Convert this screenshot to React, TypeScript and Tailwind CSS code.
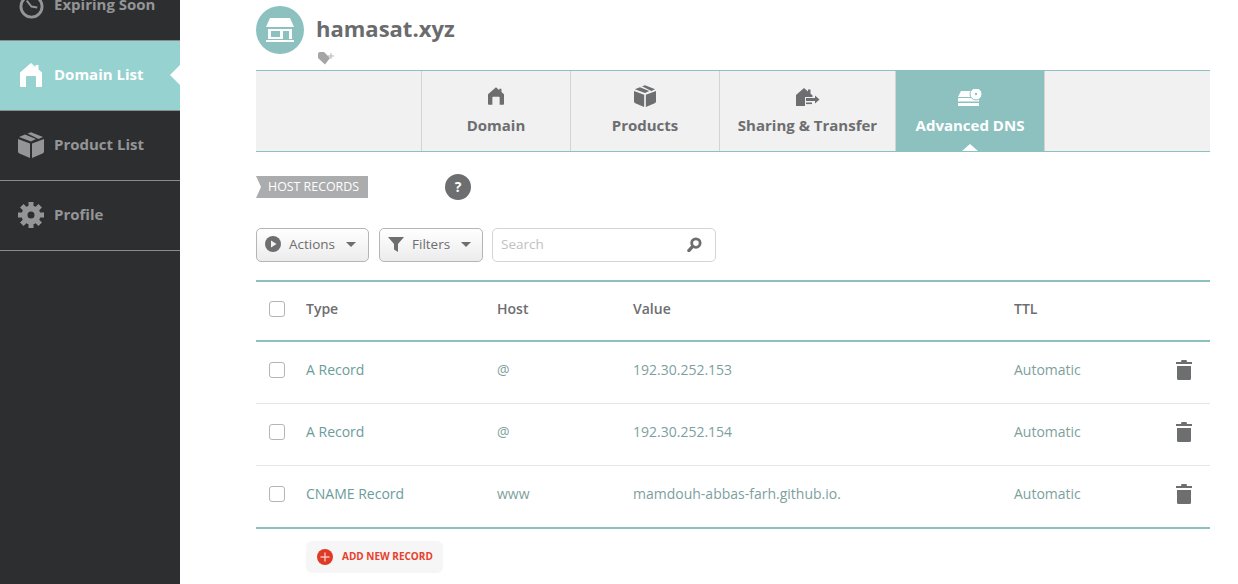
const fontStack = "font-['Open_Sans','Lato',sans-serif]";

// Icons drawn by hand to match the reference
function ClockIcon({ className }: { className?: string }) {
  return (
    <svg viewBox="0 0 26 26" className={className} fill="none" stroke="currentColor">
      <circle cx="13" cy="13" r="11" strokeWidth="3" />
      <path d="M8 7 L13 13 L19 14" strokeWidth="2" />
    </svg>
  );
}

function HomeIcon({ className }: { className?: string }) {
  return (
    <svg viewBox="0 0 22 24" className={className} fill="currentColor">
      <path d="M11 0 L15.5 4 V2 H18.5 V6.5 L22 9.5 V23 Q22 24 21 24 H16 V14 Q16 13 15 13 H7 Q6 13 6 14 V24 H1 Q0 24 0 23 V9.5 Z" />
    </svg>
  );
}

function BoxIcon({ className }: { className?: string }) {
  return (
    <svg viewBox="0 0 26 26" className={className} fill="currentColor">
      <path d="M0 7 L12 11.5 V26 L1.5 21.5 Q0 21 0 19.5 Z" />
      <path d="M26 7 L14 11.5 V26 L24.5 21.5 Q26 21 26 19.5 Z" />
      <path d="M1 5 L7 2.6 L18 7 L13 9.4 Z" />
      <path d="M9.5 1.6 L13 0.2 L25 5 L20.5 7 Z" />
    </svg>
  );
}

function GearIcon({ className }: { className?: string }) {
  return (
    <svg viewBox="0 0 26 26" className={className}>
      <circle cx="13" cy="13" r="6.5" fill="none" stroke="currentColor" strokeWidth="6" />
      <path
        stroke="currentColor"
        strokeWidth="5"
        d="M13 0 V5 M13 21 V26 M0 13 H5 M21 13 H26 M3.8 3.8 L7.3 7.3 M18.7 18.7 L22.2 22.2 M3.8 22.2 L7.3 18.7 M18.7 7.3 L22.2 3.8"
      />
    </svg>
  );
}

function StoreIcon({ className }: { className?: string }) {
  return (
    <svg viewBox="0 0 28 24" className={className} fill="white">
      <path d="M4 0 H24 L28 9 H0 Z" />
      <path fillRule="evenodd" d="M2 11 H26 V21 H2 Z M5 13 V19 H14 V13 Z M17 13 V21 H23 V13 Z" />
      <rect x="0" y="22" width="28" height="2" />
    </svg>
  );
}

function TagPlusIcon({ className }: { className?: string }) {
  return (
    <svg viewBox="0 0 17 13" className={className} fill="#a5a5a5">
      <path d="M0 2 Q0 0 2 0 H6 L12 6 L7 12.5 L0 6 Z" />
      <path d="M13 1 V7 M10 4 H16" stroke="#b5b5b5" strokeWidth="1" fill="none" />
    </svg>
  );
}

function ShareIcon({ className }: { className?: string }) {
  return (
    <svg viewBox="0 0 24 18" className={className} fill="currentColor">
      <path d="M8 0 L12 3.5 V1.5 H14.5 V5.5 L16.5 7.5 V9 H9 V18 H0 V7 Z" />
      <path d="M10 10 H19 V7.5 L23.5 11.5 L19 15.5 V13 H10 Z" />
      <rect x="10" y="14.5" width="6" height="1.6" />
    </svg>
  );
}

function ServerIcon({ className }: { className?: string }) {
  return (
    <svg viewBox="0 0 24 17" className={className} fill="white">
      <path d="M3 2 H15 V8 H0 Z" />
      <rect x="0" y="9" width="21" height="3.5" />
      <rect x="0" y="14" width="21" height="3" />
      <circle cx="18" cy="5" r="6" stroke="#8dc1c0" strokeWidth="1" />
      <circle cx="18" cy="5" r="1.2" fill="#8dc1c0" />
    </svg>
  );
}

function PlayIcon() {
  return (
    <svg viewBox="0 0 16 16" className="w-4 h-4 shrink-0">
      <circle cx="8" cy="8" r="8" fill="#6d6e70" />
      <path d="M6 4.5 L11.5 8 L6 11.5 Z" fill="#f4f4f4" />
    </svg>
  );
}

function FunnelIcon() {
  return (
    <svg viewBox="0 0 16 16" className="w-4 h-4 shrink-0" fill="#6d6e70">
      <path d="M0 1 H16 L10 8 V16 L6 13.5 V8 Z" />
    </svg>
  );
}

function SearchIcon() {
  return (
    <svg viewBox="0 0 16 16" className="w-[15px] h-[15px]" fill="none" stroke="#6d6e70">
      <circle cx="9.5" cy="6.5" r="4.5" strokeWidth="3" />
      <path d="M6 10 L2 14.5" strokeWidth="3.5" strokeLinecap="round" />
    </svg>
  );
}

function TrashIcon() {
  return (
    <svg viewBox="0 0 16 20" className="w-4 h-5" fill="#6d6e70">
      <path d="M5.5 0 H10.5 L11 2 H16 V4 H0 V2 H5 Z" />
      <path d="M1 6 H15 V18.5 Q15 20 13.5 20 H2.5 Q1 20 1 18.5 Z" />
    </svg>
  );
}

function Caret() {
  return <span className="ml-[3px] block w-0 h-0 border-x-[5.5px] border-x-transparent border-t-[5px] border-t-[#6d6e70]" />;
}

const navItems = [
  { label: 'Product List', Icon: BoxIcon },
  { label: 'Profile', Icon: GearIcon },
];

const records = [
  { type: 'A Record', host: '@', value: '192.30.252.153' },
  { type: 'A Record', host: '@', value: '192.30.252.154' },
  { type: 'CNAME Record', host: 'www', value: 'mamdouh-abbas-farh.github.io.' },
];

function Checkbox() {
  return <span className="block w-4 h-4 rounded-[3px] border border-[#b5b5b5] bg-white" />;
}

export default function App() {
  return (
    <div className={`${fontStack} flex h-[584px] w-[1238px] overflow-hidden bg-white`}>
      {/* Sidebar, scrolled so the first row is cut off */}
      <aside className="w-[180px] shrink-0 bg-[#2d2e30] text-[15px] font-bold text-[#949596]">
        <div className="-mt-[30px] flex h-[70px] items-center gap-[10px] pb-[2px] pl-[19px]">
          <ClockIcon className="mt-[5px] w-[25px] h-[25px]" />
          <span>Expiring Soon</span>
        </div>
        <div className="h-px bg-[#8a8b8c]" />
        <div className="relative flex h-[69px] items-center gap-[12px] bg-[#96d2cf] pb-[2px] pl-[20px] text-white">
          <HomeIcon className="w-[22px] h-6" />
          <span>Domain List</span>
          <span className="absolute right-0 top-[24px] h-0 w-0 border-y-[10px] border-r-[10px] border-y-transparent border-r-white" />
        </div>
        <div className="h-px bg-[#8a8b8c]" />
        {navItems.map(({ label, Icon }) => (
          <div key={label} className="flex h-[70px] items-center gap-[10px] border-b border-[#8a8b8c] pb-[2px] pl-[18px]">
            <Icon className="w-[26px] h-[26px]" />
            <span>{label}</span>
          </div>
        ))}
      </aside>

      <main className="ml-[76px] w-[954px] text-[#6d6e70]">
        {/* Domain heading */}
        <div className="flex h-[70px] pt-[6px]">
          <div className="flex h-12 w-12 items-center justify-center rounded-full bg-[#8dc1c0]">
            <StoreIcon className="w-7 h-6" />
          </div>
          <div className="ml-3">
            <h1 className="mt-[6px] text-[22px] leading-8 font-bold text-[#6a6b6d]">hamasat.xyz</h1>
            <TagPlusIcon className="mt-[8px] ml-[2px] w-[17px] h-[13px]" />
          </div>
        </div>

        {/* Tabs */}
        <div className="flex h-[82px] border-y border-[#8dc1c0] bg-[#f1f1f1] text-[15px] font-bold">
          <div className="w-[166px] border-r border-[#d4d4d4]" />
          <div className="flex w-[149px] flex-col items-center border-r border-[#d4d4d4] pt-[16px]">
            <HomeIcon className="w-4 h-[18px]" />
            <span className="mt-[9px]">Domain</span>
          </div>
          <div className="flex w-[149px] flex-col items-center border-r border-[#d4d4d4] pt-[14px]">
            <BoxIcon className="w-[22px] h-[22px]" />
            <span className="mt-[7px]">Products</span>
          </div>
          <div className="flex w-[176px] flex-col items-center border-r border-[#d4d4d4] pt-[17px]">
            <ShareIcon className="w-6 h-[18px]" />
            <span className="mt-[8px]">Sharing &amp; Transfer</span>
          </div>
          <div className="relative flex w-[149px] flex-col items-center border-r border-[#d4d4d4] bg-[#8dc1c0] pt-[18px] text-white">
            <ServerIcon className="w-6 h-[17px]" />
            <span className="mt-[8px]">Advanced DNS</span>
            <span className="absolute bottom-0 left-[66px] h-0 w-0 border-x-[8px] border-b-[7px] border-x-transparent border-b-white" />
          </div>
        </div>

        {/* Section label */}
        <div className="mt-[22px] flex h-[26px] items-center">
          <div className="relative flex h-[22px] w-[112px] items-center bg-[#abacae] pl-3 text-[12.4px] text-white">
            <span className="absolute left-0 top-0 h-0 w-0 border-y-[11px] border-l-[5px] border-y-transparent border-l-white" />
            HOST RECORDS
          </div>
          <span className="ml-[77px] flex h-[26px] w-[26px] items-center justify-center rounded-full bg-[#6d6e70] text-sm font-bold text-white">
            ?
          </span>
        </div>

        {/* Toolbar */}
        <div className="mt-[28px] flex h-[34px] text-[13.5px]">
          <button className="flex w-[113px] items-center gap-2 rounded-[5px] border border-[#b5b5b5] bg-gradient-to-b from-white to-[#ececec] pb-[2px] pl-2">
            <PlayIcon />
            <span>Actions</span>
            <Caret />
          </button>
          <button className="ml-[10px] flex w-[104px] items-center gap-2 rounded-[5px] border border-[#b5b5b5] bg-gradient-to-b from-white to-[#ececec] pb-[2px] pl-2">
            <FunnelIcon />
            <span>Filters</span>
            <Caret />
          </button>
          <div className="ml-[9px] flex w-[224px] items-center justify-between rounded-[5px] border border-[#d4d4d4] pb-[2px] pl-2 pr-[13px] text-[#c0c0c0]">
            <span>Search</span>
            <SearchIcon />
          </div>
        </div>

        {/* Host records table */}
        <div className="mt-[18px] border-y-2 border-[#8dc1c0] text-sm">
          <div className="flex h-[60px] items-center border-b-2 border-[#8dc1c0] pb-[5px] font-semibold">
            <div className="w-[50px] pl-[13px]"><Checkbox /></div>
            <div className="w-[191px]">Type</div>
            <div className="w-[136px]">Host</div>
            <div className="w-[381px]">Value</div>
            <div>TTL</div>
          </div>
          {records.map((r, idx) => (
            <div key={idx} className={`flex items-center pb-[5px] text-[#7d9f9e] ${idx < 2 ? 'h-[62px] border-b border-[#e6e6e6]' : 'h-[61px]'}`}>
              <div className="w-[50px] pl-[13px]"><Checkbox /></div>
              <div className="w-[191px] text-[#6b9c9a]">{r.type}</div>
              <div className="w-[136px]">{r.host}</div>
              <div className="w-[381px]">{r.value}</div>
              <div className="w-[162px]">Automatic</div>
              <TrashIcon />
            </div>
          ))}
        </div>

        {/* Add record */}
        <button className="ml-[50px] mt-[12px] flex h-8 w-[137px] items-center gap-[9px] rounded-md bg-[#f6f6f6] pb-px pl-[11px] text-[10px] font-bold text-[#e8402c]">
          <svg viewBox="0 0 16 16" className="w-4 h-4">
            <circle cx="8" cy="8" r="8" fill="#df3a26" />
            <path d="M8 3.5 V12.5 M3.5 8 H12.5" stroke="#f5c4bd" strokeWidth="1.4" />
          </svg>
          ADD NEW RECORD
        </button>
      </main>
    </div>
  );
}
